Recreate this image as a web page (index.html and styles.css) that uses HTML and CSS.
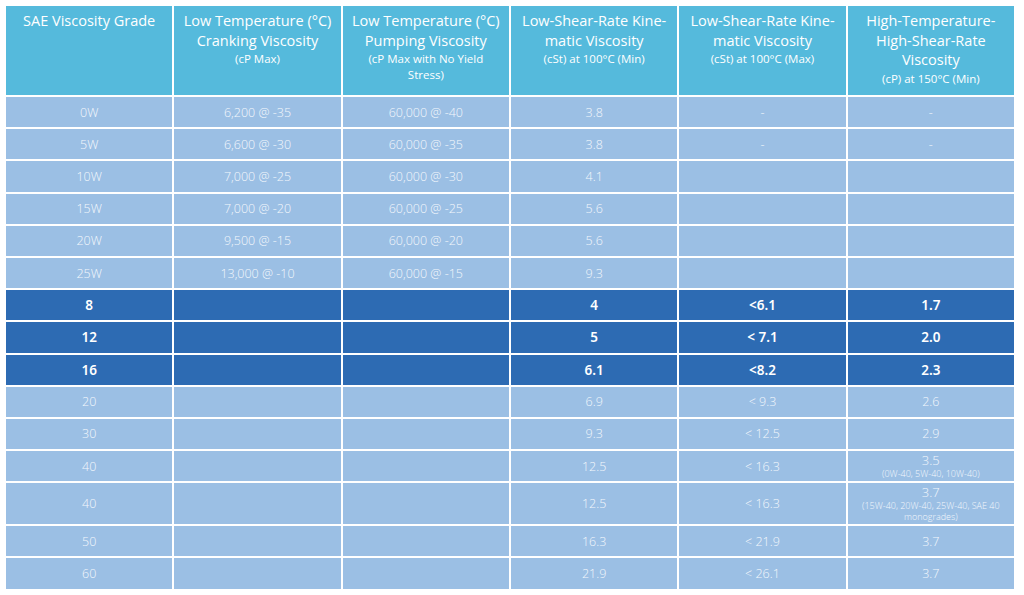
FILE: index.html
```html
<!DOCTYPE html>
<html>
<head>
<meta charset="utf-8">
<link rel="stylesheet" href="styles.css">
</head>
<body>
<table class="grid">
  <thead>
    <tr>
      <th><span class="h">SAE Viscosity Grade</span></th>
      <th><span class="h">Low Temperature (°C) Cranking Viscosity</span><span class="sub">(cP Max)</span></th>
      <th><span class="h">Low Temperature (°C) Pumping Viscosity</span><span class="sub">(cP Max with No Yield Stress)</span></th>
      <th><span class="h">Low-Shear-Rate Kine-<br>matic Viscosity</span><span class="sub">(cSt) at 100°C (Min)</span></th>
      <th><span class="h">Low-Shear-Rate Kine-<br>matic Viscosity</span><span class="sub">(cSt) at 100°C (Max)</span></th>
      <th><span class="h">High-Temperature-<br>High-Shear-Rate<br>Viscosity</span><span class="sub">(cP) at 150°C (Min)</span></th>
    </tr>
  </thead>
  <tbody>
    <tr class="lt"><td>0W</td><td>6,200 @ -35</td><td>60,000 @ -40</td><td>3.8</td><td>-</td><td>-</td></tr>
    <tr class="lt"><td>5W</td><td>6,600 @ -30</td><td>60,000 @ -35</td><td>3.8</td><td>-</td><td>-</td></tr>
    <tr class="lt"><td>10W</td><td>7,000 @ -25</td><td>60,000 @ -30</td><td>4.1</td><td></td><td></td></tr>
    <tr class="lt"><td>15W</td><td>7,000 @ -20</td><td>60,000 @ -25</td><td>5.6</td><td></td><td></td></tr>
    <tr class="lt"><td>20W</td><td>9,500 @ -15</td><td>60,000 @ -20</td><td>5.6</td><td></td><td></td></tr>
    <tr class="lt"><td>25W</td><td>13,000 @ -10</td><td>60,000 @ -15</td><td>9.3</td><td></td><td></td></tr>
    <tr class="dk"><td>8</td><td></td><td></td><td>4</td><td>&lt;6.1</td><td>1.7</td></tr>
    <tr class="dk"><td>12</td><td></td><td></td><td>5</td><td>&lt; 7.1</td><td>2.0</td></tr>
    <tr class="dk"><td>16</td><td></td><td></td><td>6.1</td><td>&lt;8.2</td><td>2.3</td></tr>
    <tr class="lt"><td>20</td><td></td><td></td><td>6.9</td><td>&lt; 9.3</td><td>2.6</td></tr>
    <tr class="lt"><td>30</td><td></td><td></td><td>9.3</td><td>&lt; 12.5</td><td>2.9</td></tr>
    <tr class="lt"><td>40</td><td></td><td></td><td>12.5</td><td>&lt; 16.3</td><td><span class="v">3.5</span><span class="note">(0W-40, 5W-40, 10W-40)</span></td></tr>
    <tr class="lt tall"><td>40</td><td></td><td></td><td>12.5</td><td>&lt; 16.3</td><td><span class="v">3.7</span><span class="note">(15W-40, 20W-40, 25W-40, SAE 40 monogrades)</span></td></tr>
    <tr class="lt"><td>50</td><td></td><td></td><td>16.3</td><td>&lt; 21.9</td><td>3.7</td></tr>
    <tr class="lt"><td>60</td><td></td><td></td><td>21.9</td><td>&lt; 26.1</td><td>3.7</td></tr>
  </tbody>
</table>
</body>
</html>
```

FILE: styles.css
```css
html, body {
  margin: 0;
  padding: 0;
  background: #ffffff;
}

body {
  font-family: "Open Sans", "Noto Sans", sans-serif;
}

.grid {
  margin: 4px 0 0 4px;
  width: 1012px;
  border-collapse: separate;
  border-spacing: 2px;
  table-layout: fixed;
}

.grid th {
  background: #55badc;
  color: #ffffff;
  height: 89px;
  vertical-align: top;
  padding: 5px 8px 0;
  font-weight: 400;
  text-align: center;
  box-sizing: border-box;
}

.grid th .h {
  display: block;
  font-size: 14.5px;
  line-height: 19.5px;
}

.grid th .sub {
  display: block;
  font-size: 11.5px;
  line-height: 16px;
  margin-top: 1px;
}

.grid td {
  height: 30.2px;
  padding: 0 4px;
  text-align: center;
  vertical-align: middle;
  box-sizing: border-box;
}

.lt td {
  background: #9bbfe4;
  color: #f3f7fc;
  font-size: 12.5px;
  font-weight: 300;
}

.dk td {
  background: #2d6bb3;
  color: #ffffff;
  font-size: 13.5px;
  font-weight: 600;
  font-family: "Noto Sans", "Open Sans", sans-serif;
}

.lt.tall td {
  height: 41px;
}

.v {
  display: block;
  font-size: 13px;
  line-height: 15px;
}

.note {
  display: block;
  font-size: 9px;
  line-height: 11px;
  padding: 0 10px;
}
```
